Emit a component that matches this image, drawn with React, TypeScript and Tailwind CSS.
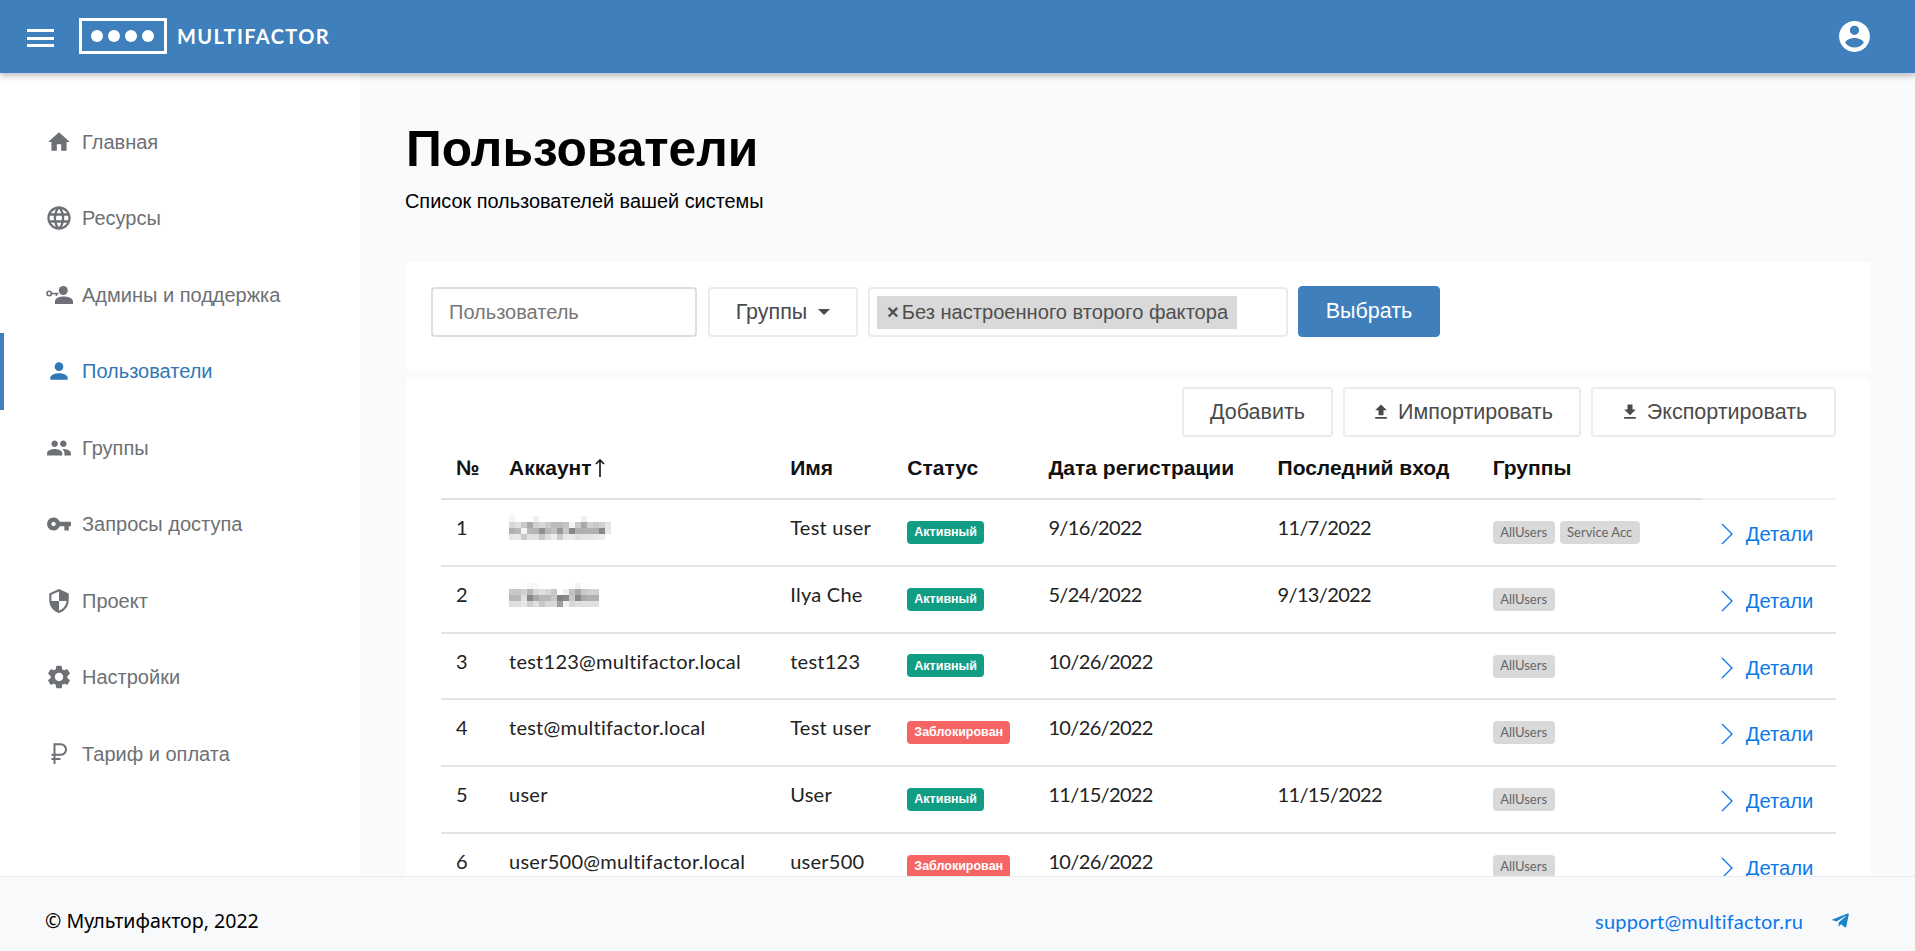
import { FaTelegramPlane } from 'react-icons/fa';

const icons = {
  home: 'M10 20v-6h4v6h5v-8h3L12 3 2 12h3v8z',
  globe:
    'M11.99 2C6.47 2 2 6.48 2 12s4.47 10 9.99 10C17.52 22 22 17.52 22 12S17.52 2 11.99 2zm6.93 6h-2.95c-.32-1.25-.78-2.45-1.38-3.56 1.84.63 3.37 1.91 4.33 3.56zM12 4.04c.83 1.2 1.48 2.53 1.91 3.96h-3.82c.43-1.43 1.08-2.76 1.91-3.96zM4.26 14C4.1 13.36 4 12.69 4 12s.1-1.36.26-2h3.38c-.08.66-.14 1.32-.14 2 0 .68.06 1.34.14 2H4.26zm.82 2h2.95c.32 1.25.78 2.45 1.38 3.56-1.84-.63-3.37-1.9-4.33-3.56zm2.95-8H5.08c.96-1.66 2.49-2.93 4.33-3.56C8.81 5.55 8.35 6.75 8.03 8zM12 19.96c-.83-1.2-1.48-2.53-1.91-3.96h3.82c-.43 1.43-1.08 2.76-1.91 3.96zM14.34 14H9.66c-.09-.66-.16-1.32-.16-2 0-.68.07-1.35.16-2h4.68c.09.65.16 1.32.16 2 0 .68-.07 1.34-.16 2zm.25 5.56c.6-1.11 1.06-2.31 1.38-3.56h2.95c-.96 1.65-2.49 2.93-4.33 3.56zM16.36 14c.08-.66.14-1.32.14-2 0-.68-.06-1.34-.14-2h3.38c.16.64.26 1.31.26 2s-.1 1.36-.26 2h-3.38z',
  person: 'M12 12c2.21 0 4-1.79 4-4s-1.79-4-4-4-4 1.79-4 4 1.79 4 4 4zm0 2c-2.67 0-8 1.34-8 4v2h16v-2c0-2.66-5.33-4-8-4z',
  people:
    'M16 11c1.66 0 2.99-1.34 2.99-3S17.66 5 16 5c-1.66 0-3 1.34-3 3s1.34 3 3 3zm-8 0c1.66 0 2.99-1.34 2.99-3S9.66 5 8 5C6.34 5 5 6.34 5 8s1.34 3 3 3zm0 2c-2.33 0-7 1.17-7 3.5V19h14v-2.5c0-2.33-4.67-3.5-7-3.5zm8 0c-.29 0-.62.02-.97.05 1.16.84 1.97 1.97 1.97 3.45V19h6v-2.5c0-2.33-4.67-3.5-7-3.5z',
  key: 'M12.65 10C11.83 7.67 9.61 6 7 6c-3.31 0-6 2.69-6 6s2.69 6 6 6c2.61 0 4.83-1.67 5.65-4H17v4h4v-4h2v-4H12.65zM7 14c-1.1 0-2-.9-2-2s.9-2 2-2 2 .9 2 2-.9 2-2 2z',
  shield: 'M12 1L3 5v6c0 5.55 3.84 10.74 9 12 5.16-1.26 9-6.45 9-12V5l-9-4zm0 10.99h7c-.53 4.12-3.28 7.79-7 8.94V12H5V6.3l7-3.11v8.8z',
  gear:
    'M19.14 12.94c.04-.3.06-.61.06-.94 0-.32-.02-.64-.07-.94l2.03-1.58c.18-.14.23-.41.12-.61l-1.92-3.32c-.12-.22-.37-.29-.59-.22l-2.39.96c-.5-.38-1.03-.7-1.62-.94l-.36-2.54c-.04-.24-.24-.41-.48-.41h-3.84c-.24 0-.43.17-.47.41l-.36 2.54c-.59.24-1.13.57-1.62.94l-2.39-.96c-.22-.08-.47 0-.59.22L2.74 8.87c-.12.21-.08.47.12.61l2.03 1.58c-.05.3-.09.63-.09.94s.02.64.07.94l-2.03 1.58c-.18.14-.23.41-.12.61l1.92 3.32c.12.22.37.29.59.22l2.39-.96c.5.38 1.03.7 1.62.94l.36 2.54c.05.24.24.41.48.41h3.84c.24 0 .44-.17.47-.41l.36-2.54c.59-.24 1.13-.56 1.62-.94l2.39.96c.22.08.47 0 .59-.22l1.92-3.32c.12-.22.07-.47-.12-.61l-2.01-1.58zM12 15.6c-1.98 0-3.6-1.62-3.6-3.6s1.62-3.6 3.6-3.6 3.6 1.62 3.6 3.6-1.62 3.6-3.6 3.6z',
  account:
    'M12 2C6.48 2 2 6.48 2 12s4.48 10 10 10 10-4.48 10-10S17.52 2 12 2zm0 3c1.66 0 3 1.34 3 3s-1.34 3-3 3-3-1.34-3-3 1.34-3 3-3zm0 14.2c-2.5 0-4.71-1.28-6-3.22.03-1.99 4-3.08 6-3.08 1.99 0 5.97 1.09 6 3.08-1.29 1.94-3.5 3.22-6 3.22z',
  upload: 'M9 16h6v-6h4l-7-7-7 7h4zm-4 2h14v2H5z',
  download: 'M19 9h-4V3H9v6H5l7 7 7-7zM5 18v2h14v-2H5z',
};

function MdIcon({ d, size = 26, className = '' }: { d: string; size?: number; className?: string }) {
  return (
    <svg viewBox="0 0 24 24" width={size} height={size} fill="currentColor" className={className}>
      <path d={d} />
    </svg>
  );
}

function AdminIcon() {
  return (
    <svg viewBox="0 0 27 18" width="27" height="18" fill="currentColor">
      <circle cx="17.3" cy="4.5" r="4.5" />
      <path d="M9 18v-2.5c0-4 5-5 8.5-5s9.5 1 9.5 5V18z" />
      <circle cx="3.2" cy="7.5" r="2.2" fill="none" stroke="currentColor" strokeWidth="1.6" />
      <path d="M5.4 6.8h7v1.5h-1.2v1.7h-1.6V8.3h-4.2z" />
    </svg>
  );
}

function RubleIcon() {
  return (
    <svg viewBox="0 0 16 21" width="16" height="21" fill="none" stroke="currentColor" strokeWidth="2">
      <path d="M3.5 21V1.2h6.2a5.2 5.2 0 0 1 0 10.6H0.5" />
      <path d="M0.5 16h9" />
    </svg>
  );
}

const nav = [
  { label: 'Главная', icon: <MdIcon d={icons.home} /> },
  { label: 'Ресурсы', icon: <MdIcon d={icons.globe} size={28} /> },
  { label: 'Админы и поддержка', icon: <AdminIcon /> },
  { label: 'Пользователи', icon: <MdIcon d={icons.person} />, active: true },
  { label: 'Группы', icon: <MdIcon d={icons.people} /> },
  { label: 'Запросы доступа', icon: <MdIcon d={icons.key} /> },
  { label: 'Проект', icon: <MdIcon d={icons.shield} /> },
  { label: 'Настройки', icon: <MdIcon d={icons.gear} size={28} /> },
  { label: 'Тариф и оплата', icon: <RubleIcon /> },
];

// blurred account names from the screenshot, one hex gray per 6px block
const mosaicA = [
  'f4 ff ff ff f0 ff ff ff ff ff ff ff f0 ff ff ff ff',
  'd8 e0 c8 a8 d0 d8 cc bc bc c4 f4 ca a8 d0 c8 d0 e4',
  'b0 b8 f4 b8 b4 90 b8 c0 98 c8 88 b0 b0 b0 b0 88 e8',
  'e8 e8 c8 e0 e0 c8 e0 ee cc e8 e8 e0 e4 e4 e8 ec ff',
];
const mosaicB = [
  'ff ff ff f8 f8 ff ff ff ff ff ff f4 ff ff ff',
  'c8 c8 d0 b8 d8 e0 d8 c8 ff f0 c0 a8 c8 d0 d0',
  'b8 b8 e0 88 a8 b8 b8 c8 80 88 c8 88 a8 b0 b0',
  'e0 e0 e8 d0 e0 c8 d8 d8 a0 f0 d8 e0 e0 e0 e0',
];

function Mosaic({ rows }: { rows: string[] }) {
  const cols = rows[0].split(' ').length;
  return (
    <svg width={cols * 6} height={rows.length * 6} shapeRendering="crispEdges" className="blur-[0.6px]">
      {rows.map((row, y) =>
        row.split(' ').map((g, x) => <rect key={x} x={x * 6} y={y * 6} width="6" height="6" fill={`#${g}${g}${g}`} />),
      )}
    </svg>
  );
}

const users = [
  { n: 1, mosaic: mosaicA, name: 'Test user', status: 'Активный', reg: '9/16/2022', last: '11/7/2022', groups: ['AllUsers', 'Service Acc'] },
  { n: 2, mosaic: mosaicB, name: 'Ilya Che', status: 'Активный', reg: '5/24/2022', last: '9/13/2022', groups: ['AllUsers'] },
  { n: 3, account: 'test123@multifactor.local', name: 'test123', status: 'Активный', reg: '10/26/2022', last: '', groups: ['AllUsers'] },
  { n: 4, account: 'test@multifactor.local', name: 'Test user', status: 'Заблокирован', reg: '10/26/2022', last: '', groups: ['AllUsers'] },
  { n: 5, account: 'user', name: 'User', status: 'Активный', reg: '11/15/2022', last: '11/15/2022', groups: ['AllUsers'] },
  { n: 6, account: 'user500@multifactor.local', name: 'user500', status: 'Заблокирован', reg: '10/26/2022', last: '', groups: ['AllUsers'] },
];

const headCell = 'pl-[15px] text-left font-bold text-[21px] text-[#111] border-b-2 border-[#dfe0e1] align-middle';
const bodyCell = "pl-[15px] pt-[15px] align-top text-[20px] leading-[24px] text-[#222] font-['Lato',sans-serif] tracking-[0.25px]";
const dateCell = "pl-[15px] pt-[15px] align-top text-[20px] leading-[24px] text-[#222] font-['Lato',sans-serif] tracking-[-0.65px]";
const outlineBtn = 'flex items-center justify-center gap-[7px] h-[50px] bg-white border-2 border-[#ececec] rounded-[4px] text-[21.5px] text-[#4a4a4a]';

export default function App() {
  return (
    <div className="flex flex-col h-screen overflow-hidden font-['Liberation_Sans',sans-serif] bg-white">
      {/* Header */}
      <header className="relative z-10 shrink-0 h-[73px] flex items-center justify-between bg-[#3f80bc] border-b border-[#3b82c8] shadow-[0_3px_6px_rgba(0,0,0,0.25)] pl-[27px] pr-[42px]">
        <div className="flex items-center">
          <div className="w-[27px] mt-[4px] flex flex-col gap-[4.5px]">
            <div className="h-[3px] bg-white" />
            <div className="h-[3px] bg-white" />
            <div className="h-[3px] bg-white" />
          </div>
          <svg width="88" height="36" viewBox="0 0 88 36" className="ml-[25px]">
            <rect x="1.5" y="1.5" width="85" height="33" fill="none" stroke="#fff" strokeWidth="3" />
            <circle cx="18" cy="18" r="6" fill="#fff" />
            <circle cx="35" cy="18" r="6" fill="#fff" />
            <circle cx="52" cy="18" r="6" fill="#fff" />
            <circle cx="69" cy="18" r="6" fill="#fff" />
          </svg>
          <span className="ml-[10px] font-['Lato',sans-serif] font-bold text-[20px] tracking-[1.4px] text-white">MULTIFACTOR</span>
        </div>
        <MdIcon d={icons.account} size={37} className="text-white" />
      </header>

      <div className="flex flex-1 min-h-0">
        {/* Sidebar */}
        <aside className="w-[360px] shrink-0 bg-white pt-[30.5px]">
          {nav.map((item) => (
            <div
              key={item.label}
              className={`h-[76.5px] flex items-center border-l-4 text-[20px] ${
                item.active ? 'border-[#3f80bc] text-[#2f77b7]' : 'border-transparent text-[#6d7075]'
              }`}
            >
              <span className="w-[28px] ml-[41px] mr-[9px] flex justify-center shrink-0">{item.icon}</span>
              {item.label}
            </div>
          ))}
        </aside>

        {/* Main */}
        <main className="flex-1 min-w-0 overflow-hidden bg-[#f9fafc] pl-[46px] pr-[44px]">
          <h1 className="mt-[46px] text-[49.7px] leading-[60px] font-bold text-black">Пользователи</h1>
          <p className="mt-[10px] -ml-px text-[19.9px] leading-[24px] text-black">Список пользователей вашей системы</p>

          {/* Filters */}
          <section className="mt-[49px] h-[109px] bg-white rounded-[3px] flex items-start pt-[25px] pl-[25px] gap-[10px]">
            <input
              placeholder="Пользователь"
              className="w-[266px] h-[50px] mr-[1px] px-[16px] bg-white border-2 border-[#dedede] rounded-[4px] text-[20px] placeholder:text-[#777] outline-none"
            />
            <button className="w-[150px] h-[50px] flex items-center justify-center gap-[11px] bg-white border-2 border-[#ececec] rounded-[4px] text-[21.5px] text-[#4a4a4a]">
              Группы
              <svg width="12" height="6" viewBox="0 0 12 6" fill="currentColor">
                <path d="M0 0h12L6 6z" />
              </svg>
            </button>
            <div className="w-[420px] h-[50px] flex items-center pl-[7px] bg-white border-2 border-[#ececec] rounded-[4px]">
              <span className="w-[360px] h-[33px] flex items-center gap-[3px] pl-[10px] bg-[#d9d9d9] text-[20.1px] text-[#4f4f4f] whitespace-nowrap">
                <span className="font-bold">×</span>
                Без настроенного второго фактора
              </span>
            </div>
            <button className="w-[142px] h-[51px] -mt-px bg-[#3f80bc] border border-[#3b7fc4] rounded-[4px] text-[21.5px] text-white">Выбрать</button>
          </section>

          {/* Users */}
          <section className="mt-[8px] bg-white rounded-[3px] px-[35px] pt-[8px] h-[600px]">
            <div className="flex justify-end gap-[10px]">
              <button className={`${outlineBtn} w-[151px]`}>Добавить</button>
              <button className={`${outlineBtn} w-[238px]`}>
                <MdIcon d={icons.upload} size={20} />
                Импортировать
              </button>
              <button className={`${outlineBtn} w-[245px]`}>
                <MdIcon d={icons.download} size={20} />
                Экспортировать
              </button>
            </div>

            <table className="w-full table-fixed border-collapse">
              <thead>
                <tr className="h-[62px]">
                  <th className={`${headCell} w-[53px]`}>№</th>
                  <th className={`${headCell} w-[281px]`}>
                    <span className="inline-flex items-center gap-[3px]">
                      Аккаунт
                      <svg width="10" height="18" viewBox="0 0 10 18" fill="none" stroke="currentColor" strokeWidth="1.6">
                        <path d="M5 18V1M1 5l4-4 4 4" />
                      </svg>
                    </span>
                  </th>
                  <th className={`${headCell} w-[117px]`}>Имя</th>
                  <th className={`${headCell} w-[141px]`}>Статус</th>
                  <th className={`${headCell} w-[229px]`}>Дата регистрации</th>
                  <th className={`${headCell} w-[215px]`}>Последний вход</th>
                  <th className={`${headCell} w-[224px]`}>Группы</th>
                  <th className="w-[134px] border-b-2 border-[#f0f0f0]" />
                </tr>
              </thead>
              <tbody>
                {users.map((u) => (
                  <tr key={u.n} className="h-[66.8px] border-b-2 border-[#e4e4e4]">
                    <td className={bodyCell}>{u.n}</td>
                    <td className={bodyCell}>{u.mosaic ? <div className="mt-[1px]"><Mosaic rows={u.mosaic} /></div> : u.account}</td>
                    <td className={bodyCell}>{u.name}</td>
                    <td className="pl-[15px] pt-[19px] align-top">
                      <span
                        className={`inline-flex items-center h-[23px] px-[7px] rounded-[4px] text-[12.5px] font-bold text-white ${
                          u.status === 'Активный' ? 'bg-[#119c84]' : 'bg-[#f56564]'
                        }`}
                      >
                        {u.status}
                      </span>
                    </td>
                    <td className={dateCell}>{u.reg}</td>
                    <td className={dateCell}>{u.last}</td>
                    <td className="pl-[15px] pt-[21px] align-top">
                      <div className="flex gap-[5px]">
                        {u.groups.map((g) => (
                          <span key={g} className="h-[23px] px-[7.5px] flex items-center rounded-[4px] bg-[#d9d9d9] font-['Lato',sans-serif] text-[13px] text-[#666] whitespace-nowrap">
                            {g}
                          </span>
                        ))}
                      </div>
                    </td>
                    <td className="pl-[19px] pt-[22px] align-top">
                      <div className="flex items-center gap-[13px] text-[20.2px] leading-[24px] text-[#0b78ea]">
                        <svg width="12" height="22" viewBox="0 0 12 22" fill="none" stroke="currentColor" strokeWidth="1.3">
                          <path d="M1 1l10 10L1 21" />
                        </svg>
                        Детали
                      </div>
                    </td>
                  </tr>
                ))}
              </tbody>
            </table>
          </section>
        </main>
      </div>

      {/* Footer */}
      <footer className="relative z-10 shrink-0 h-[75px] flex items-center justify-between bg-[#f8f9fb] border-t border-[#e9e9e9] pt-[13px] pl-[45px] pr-[65px]">
        <span className="font-['Noto_Sans',sans-serif] text-[19.6px] text-black">© Мультифактор, 2022</span>
        <div className="flex items-center gap-[28px]">
          <span className="font-['Lato',sans-serif] text-[20px] tracking-[0.2px] text-[#0b78ea]">support@multifactor.ru</span>
          <FaTelegramPlane size={19} className="text-[#1a85c8]" />
        </div>
      </footer>
    </div>
  );
}
